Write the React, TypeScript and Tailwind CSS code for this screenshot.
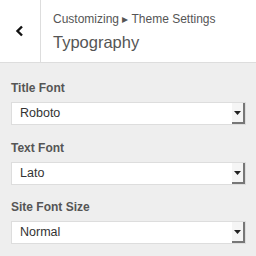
import React from "react";

function Select({ value }: { value: string }) {
  return (
    <div className="flex h-[23px] w-[235px] items-stretch border border-[#dddddd] bg-white">
      <div className="flex flex-1 items-center pl-[8px] text-[12.5px] text-[#333]">{value}</div>
      <div className="flex w-[13px] items-center justify-center border-b-[2px] border-r-[2px] border-[#777] bg-[#f5f5f5]">
        <svg width="7" height="4" viewBox="0 0 7 4">
          <polygon points="0,0 7,0 3.5,4" fill="#222" />
        </svg>
      </div>
    </div>
  );
}

export default function App() {
  return (
    <div className="h-[256px] w-[256px] overflow-hidden bg-[#eeeeee]" style={{ fontFamily: '"Liberation Sans", Arial, sans-serif' }}>
      <div className="flex h-[63px] border-b border-[#dddddd] bg-white">
        <div className="flex w-[41px] items-center justify-center border-r border-[#dddddd]">
          <svg width="10" height="12" viewBox="0 0 10 12">
            <path d="M7 1.5 L2.5 6 L7 10.5" stroke="#111" strokeWidth="2.4" fill="none" />
          </svg>
        </div>
        <div className="flex flex-col pl-[12px] pt-[11px]">
          <div className="text-[12px] leading-[16px] text-[#555]">Customizing ▸ Theme Settings</div>
          <div className="mt-[4px] text-[16.5px] leading-[22px] text-[#555]">Typography</div>
        </div>
      </div>
      <div className="flex flex-col px-[11px] pt-[17px]">
        <div className="text-[12px] font-bold leading-[16px] text-[#555]">Title Font</div>
        <div className="mt-[6px]"><Select value="Roboto" /></div>
        <div className="mt-[15px] text-[12px] font-bold leading-[16px] text-[#555]">Text Font</div>
        <div className="mt-[6px]"><Select value="Lato" /></div>
        <div className="mt-[14px] text-[12px] font-bold leading-[16px] text-[#555]">Site Font Size</div>
        <div className="mt-[6px]"><Select value="Normal" /></div>
      </div>
    </div>
  );
}
